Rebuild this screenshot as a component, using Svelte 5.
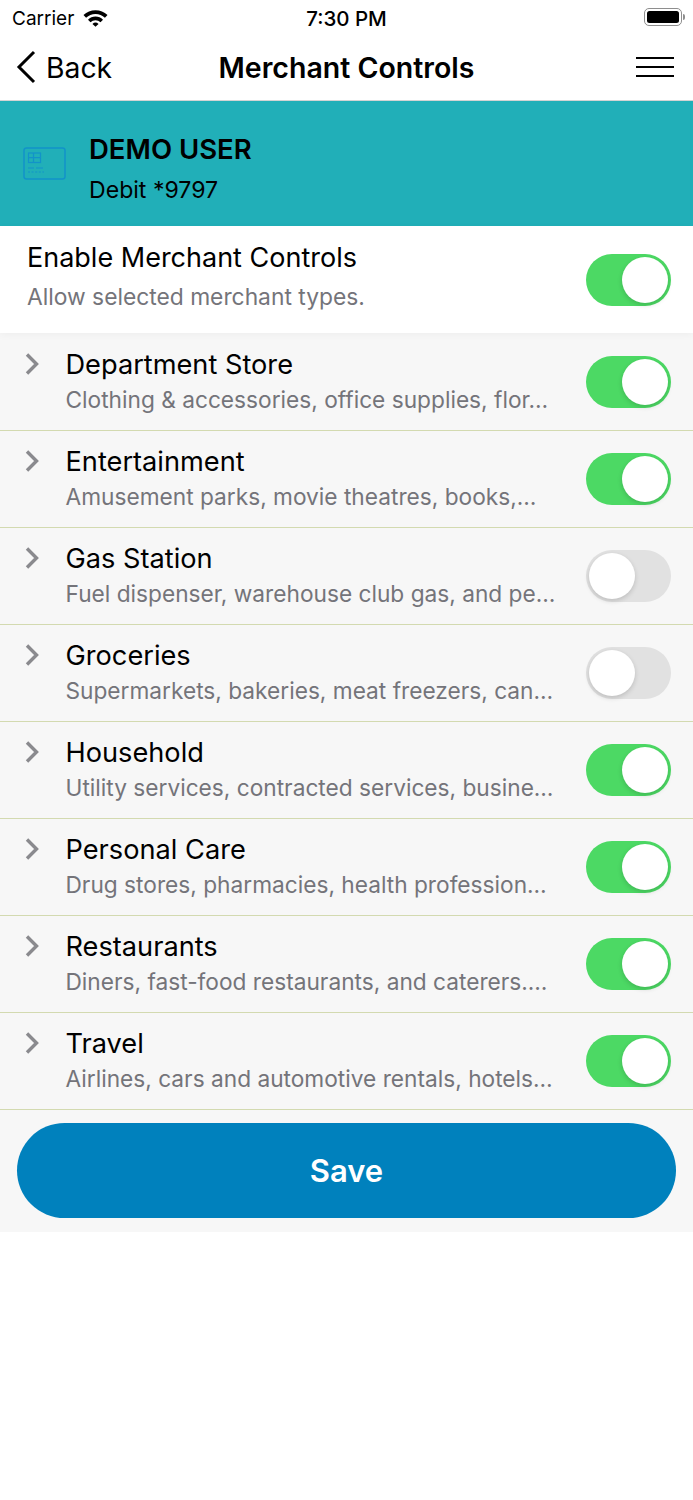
<script>
  const categories = [
    { name: 'Department Store', desc: 'Clothing & accessories, office supplies, flor…', on: true },
    { name: 'Entertainment', desc: 'Amusement parks, movie theatres, books,…', on: true },
    { name: 'Gas Station', desc: 'Fuel dispenser, warehouse club gas, and pe…', on: false },
    { name: 'Groceries', desc: 'Supermarkets, bakeries, meat freezers, can…', on: false },
    { name: 'Household', desc: 'Utility services, contracted services, busine…', on: true },
    { name: 'Personal Care', desc: 'Drug stores, pharmacies, health profession…', on: true },
    { name: 'Restaurants', desc: 'Diners, fast-food restaurants, and caterers.…', on: true },
    { name: 'Travel', desc: 'Airlines, cars and automotive rentals, hotels…', on: true }
  ];
</script>

<div class="page">
  <div class="status">
    <div class="carrier">
      <span>Carrier</span>
      <svg width="25" height="18" viewBox="0 0 26 18">
        <path d="M0.5 6 A18 18 0 0 1 25.5 6 L22.8 8.8 A14 14 0 0 0 3.2 8.8 Z" fill="#000" />
        <path d="M5.2 10.8 A11 11 0 0 1 20.8 10.8 L18.2 13.4 A7.4 7.4 0 0 0 7.8 13.4 Z" fill="#000" />
        <path d="M9.8 15.3 A4.6 4.6 0 0 1 16.2 15.3 L13 18 Z" fill="#000" />
      </svg>
    </div>
    <div class="time">7:30 PM</div>
    <div class="battery">
      <div class="battery-shell"><div class="battery-fill"></div></div>
      <div class="battery-tip"></div>
    </div>
  </div>

  <nav class="nav">
    <div class="back">
      <svg width="22" height="34" viewBox="0 0 22 34">
        <path d="M19 2 L4 17 L19 32" fill="none" stroke="#000" stroke-width="3" />
      </svg>
      <span>Back</span>
    </div>
    <h1>Merchant Controls</h1>
    <div class="menu"><span></span><span></span><span></span></div>
  </nav>

  <header class="card">
    <svg class="card-icon" width="43" height="33" viewBox="0 0 43 33">
      <rect x="1" y="1" width="41" height="31" rx="2.5" fill="none" stroke="#1293c9" stroke-width="1.5" />
      <rect x="5.5" y="6" width="12" height="9.5" fill="none" stroke="#1293c9" stroke-width="1.2" />
      <path d="M10.5 6 V15.5 M5.5 10.7 H17.5" stroke="#1293c9" stroke-width="1.2" />
      <path d="M5 21 H11 M13 21 H20" stroke="#1293c9" stroke-width="1.1" />
      <path d="M5 25 H21" stroke="#1293c9" stroke-width="1.1" stroke-dasharray="2 1.6" />
    </svg>
    <div class="card-text">
      <div class="card-name">DEMO USER</div>
      <div class="card-type">Debit *9797</div>
    </div>
  </header>

  <section class="enable">
    <div class="enable-text">
      <div class="enable-title">Enable Merchant Controls</div>
      <div class="enable-sub">Allow selected merchant types.</div>
    </div>
    <div class="switch on"><div class="knob"></div></div>
  </section>

  <div class="list">
    {#each categories as cat}
      <div class="row">
        <svg class="chevron" width="14" height="22" viewBox="0 0 14 22">
          <path d="M2 1.5 L11.5 11 L2 20.5" fill="none" stroke="#8a8a8e" stroke-width="3.4" />
        </svg>
        <div class="row-text">
          <div class="row-name">{cat.name}</div>
          <div class="row-desc">{cat.desc}</div>
        </div>
        <div class="switch" class:on={cat.on}><div class="knob"></div></div>
      </div>
    {/each}
  </div>

  <div class="footer">
    <button class="save">Save</button>
  </div>
</div>

<style>
  :global(body) {
    margin: 0;
    background: #fff;
  }

  .page {
    width: 693px;
    height: 1500px;
    background: #fff;
    font-family: Inter, "Liberation Sans", sans-serif;
    color: #000;
    overflow: hidden;
  }

  .status {
    height: 36px;
    display: grid;
    grid-template-columns: 1fr auto 1fr;
    align-items: center;
    padding: 0 8px;
  }

  .carrier {
    display: flex;
    align-items: center;
    gap: 9px;
    font-size: 19px;
    margin-left: 4px;
  }

  .time {
    font-size: 20.5px;
    font-weight: 500;
  }

  .battery {
    justify-self: end;
    display: flex;
    align-items: center;
    margin-top: -3px;
    gap: 1px;
  }

  .battery-shell {
    width: 38px;
    height: 18px;
    box-sizing: border-box;
    border: 1.5px solid #8e8e8e;
    border-radius: 5px;
    padding: 2px;
  }

  .battery-fill {
    height: 100%;
    background: #000;
    border-radius: 2.5px;
  }

  .battery-tip {
    width: 2px;
    height: 6px;
    background: #8e8e8e;
    border-radius: 0 2px 2px 0;
  }

  .nav {
    height: 64px;
    display: grid;
    grid-template-columns: 1fr auto 1fr;
    align-items: center;
    padding: 0 15px;
    border-bottom: 1px solid #d4d4d4;
  }

  .back {
    display: flex;
    align-items: center;
    gap: 9px;
    font-size: 28.3px;
    margin-top: -1px;
  }

  .back svg {
    margin-top: -2px;
  }

  .nav h1 {
    margin: -2px 0 0;
    font-size: 28.5px;
    font-weight: 600;
  }

  .menu {
    justify-self: end;
    width: 38px;
    display: flex;
    flex-direction: column;
    gap: 6.6px;
    margin: -2px 4px 0 0;
  }

  .menu span {
    height: 2.4px;
    background: #000;
  }

  .card {
    height: 125px;
    background: #21afb8;
    display: flex;
    align-items: center;
    gap: 23px;
    padding-left: 23px;
  }

  .card-text {
    margin-top: 9px;
  }

  .card-name {
    font-size: 27.5px;
    font-weight: 600;
    margin-bottom: 10px;
  }

  .card-type {
    font-size: 23.1px;
  }

  .enable {
    height: 107px;
    display: flex;
    align-items: center;
    justify-content: space-between;
    padding: 0 22px 0 27px;
    position: relative;
    box-shadow: 0 2px 8px rgba(0, 0, 0, 0.04);
  }

  .enable-text {
    align-self: flex-start;
    padding-top: 15px;
  }

  .enable-title {
    font-size: 27px;
    margin-bottom: 9px;
  }

  .enable-sub {
    font-size: 22.8px;
    color: #74747a;
  }

  .list {
    background: #f7f7f7;
    padding-top: 1px;
  }

  .row {
    height: 96px;
    display: flex;
    align-items: center;
    border-bottom: 1px solid #d3dab0;
    padding: 0 22px 0 25px;
  }

  .chevron {
    align-self: flex-start;
    margin-top: 19px;
    flex: none;
  }

  .row-text {
    margin-left: 26.5px;
    width: 495px;
    align-self: flex-start;
    padding-top: 14px;
  }

  .row-name {
    font-size: 27.2px;
    margin-bottom: 5px;
    white-space: nowrap;
  }

  .row-desc {
    font-size: 22.7px;
    color: #74747a;
    white-space: nowrap;
  }

  .switch {
    flex: none;
    box-sizing: border-box;
    margin-left: auto;
    width: 85px;
    height: 52px;
    border-radius: 26px;
    background: #e1e1e1;
    padding: 3px;
    display: flex;
    justify-content: flex-start;
  }

  .switch.on {
    background: #4cd964;
    justify-content: flex-end;
  }

  .knob {
    width: 46px;
    height: 46px;
    border-radius: 50%;
    background: #fff;
    box-shadow: 0 2px 5px rgba(0, 0, 0, 0.16);
  }

  .footer {
    height: 122px;
    background: #f7f7f7;
    display: flex;
    justify-content: center;
    padding-top: 13px;
    box-sizing: border-box;
  }

  .save {
    width: 659px;
    height: 95px;
    border: none;
    border-radius: 48px;
    background: #0081bd;
    color: #fff;
    font-family: inherit;
    font-size: 31px;
    font-weight: 600;
  }
</style>
